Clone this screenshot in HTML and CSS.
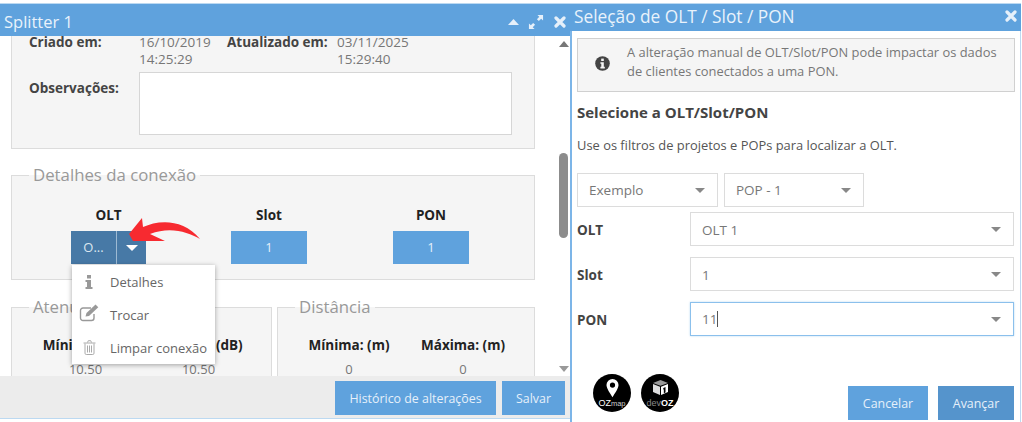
FILE: index.html
```html
<!DOCTYPE html>
<html lang="pt-BR">
<head>
<meta charset="utf-8">
<title>Splitter 1</title>
<link rel="stylesheet" href="styles.css">
</head>
<body>
<div class="desk">
  <section class="win win-left">
    <header class="bar bar-left">
      <span class="bar-title">Splitter 1</span>
      <span class="bar-tools">
        <svg class="ico-up" width="11" height="6" viewBox="0 0 11 6"><path d="M5.500 0 11 6H0Z" fill="#e6f0fa"/></svg>
        <svg class="ico-exp" width="16" height="16" viewBox="0 0 17 17"><path d="M10 1h6v6l-2-2-2.500 2.500-2-2L12 3ZM1 16v-6l2 2 2.500-2.500 2 2L5 14l2 2Z" fill="#e6f0fa"/></svg>
        <svg class="ico-x" width="12" height="12" viewBox="0 0 12 12"><path d="M2 2l8 8M10 2l-8 8" stroke="#e6f0fa" stroke-width="3.200" stroke-linecap="round"/></svg>
      </span>
    </header>
    <div class="left-body">
      <div class="scroll-content">
        <div class="panel panel-top">
          <div class="meta-row">
            <b class="meta-label">Criado em:</b>
            <div class="meta-val"><span>16/10/2019</span><span>14:25:29</span></div>
            <b class="meta-label2">Atualizado em:</b>
            <div class="meta-val"><span>03/11/2025</span><span>15:29:40</span></div>
          </div>
          <div class="obs-row">
            <b class="meta-label">Observações:</b>
            <div class="textarea"></div>
          </div>
        </div>
        <fieldset class="panel panel-conn">
          <legend>Detalhes da conexão</legend>
          <div class="conn-grid">
            <div class="conn-col">
              <b>OLT</b>
              <div class="split-btn"><span class="split-main">O...</span><span class="split-caret"><i class="caret-w"></i></span></div>
            </div>
            <div class="conn-col"><b>Slot</b><div class="val-btn">1</div></div>
            <div class="conn-col"><b>PON</b><div class="val-btn">1</div></div>
          </div>
        </fieldset>
        <div class="two-col">
          <fieldset class="panel panel-half panel-at">
            <legend>Atenuação</legend>
            <div class="half-grid">
              <div><b>Mínima: (dB)</b><span>10.50</span></div>
              <div><b>Máxima: (dB)</b><span>10.50</span></div>
            </div>
          </fieldset>
          <fieldset class="panel panel-half panel-di">
            <legend>Distância</legend>
            <div class="half-grid">
              <div><b>Mínima: (m)</b><span>0</span></div>
              <div><b>Máxima: (m)</b><span>0</span></div>
            </div>
          </fieldset>
        </div>
      </div>
      <div class="scrollbar">
        <i class="sb-up"></i>
        <i class="sb-thumb"></i>
        <i class="sb-down"></i>
      </div>
    </div>
    <footer class="left-foot">
      <button class="btn btn-hist">Histórico de alterações</button>
      <button class="btn btn-save">Salvar</button>
    </footer>
  </section>

  <section class="win win-right">
    <header class="bar bar-right">
      <span class="bar-title">Seleção de OLT / Slot / PON</span>
      <svg class="ico-x" width="12" height="12" viewBox="0 0 12 12"><path d="M2 2l8 8M10 2l-8 8" stroke="#e6f0fa" stroke-width="3.200" stroke-linecap="round"/></svg>
    </header>
    <div class="right-body">
      <div class="alert">
        <svg class="alert-ico" width="15" height="15" viewBox="0 0 15 15"><circle cx="7.500" cy="7.500" r="7.300" fill="#444"/><rect x="6.200" y="2.600" width="2.600" height="2.400" fill="#f5f5f5"/><path d="M5.400 6.200H8.800V10.800H9.800V12.400H5.400V10.800H6.300V7.800H5.400Z" fill="#f5f5f5"/></svg>
        <p>A alteração manual de OLT/Slot/PON pode impactar os dados<br>de clientes conectados a uma PON.</p>
      </div>
      <h2>Selecione a OLT/Slot/PON</h2>
      <p class="hint">Use os filtros de projetos e POPs para localizar a OLT.</p>
      <div class="filters">
        <div class="select sel-a"><span>Exemplo</span><i class="caret"></i></div>
        <div class="select sel-b"><span>POP - 1</span><i class="caret"></i></div>
      </div>
      <div class="form-row"><b>OLT</b><div class="select sel-wide"><span>OLT 1</span><i class="caret"></i></div></div>
      <div class="form-row"><b>Slot</b><div class="select sel-wide"><span>1</span><i class="caret"></i></div></div>
      <div class="form-row"><b>PON</b><div class="select sel-wide sel-focus"><span>11<i class="cursor"></i></span><i class="caret"></i></div></div>
      <div class="right-foot">
        <div class="logos">
          <div class="logo">
            <svg class="logo-pin" viewBox="0 0 16 24"><path fill-rule="evenodd" d="M8 0a7.600 7.600 0 0 1 7.600 7.600C15.600 12 11 18 8 23 5 18 .4 12 .4 7.600A7.600 7.600 0 0 1 8 0ZM8 4.300a3.300 3.300 0 1 0 0 6.600 3.300 3.300 0 0 0 0-6.600Z" fill="#fff"/></svg>
            <span class="logo-txt"><b>OZ</b><small>map</small></span>
          </div>
          <div class="logo">
            <svg class="logo-cube" viewBox="0 0 20 18"><path d="M10 0 19 3.500 10 7 1 3.500Z" fill="#999"/><path d="M1 4.800 9.400 8.100V18L1 14.500Z" fill="#ddd"/><path d="M10.600 8.100 19 4.800V14.500L10.600 18Z" fill="#fff"/><path d="M13.500 9.500 16 8.500V15L14 15.800V11L13 11.500Z" fill="#000"/></svg>
            <span class="logo-txt"><em>dev</em><b>OZ</b></span>
          </div>
        </div>
        <div class="foot-btns">
          <button class="btn btn-cancel">Cancelar</button>
          <button class="btn btn-next">Avançar</button>
        </div>
      </div>
    </div>
  </section>

  <div class="menu">
    <div class="menu-item"><svg width="10" height="15" viewBox="0 0 10 15"><path d="M3 1h4v3.500H3ZM1.500 6H7v7h1.500v2H1.500v-2H3V8H1.500Z" fill="#999"/></svg><span>Detalhes</span></div>
    <div class="menu-item"><svg class="mi-edit" width="21" height="18" viewBox="0 0 21 18"><path d="M15 10v4a2.500 2.500 0 0 1-2.500 2.500H4A2.500 2.500 0 0 1 1.500 14V6.500A2.500 2.500 0 0 1 4 4h8" fill="none" stroke="#999" stroke-width="1.400"/><path d="M6.500 12.500l1-3.500L16.500 0.500l2.800 2.800L10 12Z" fill="#999"/></svg><span>Trocar</span></div>
    <div class="menu-item"><svg class="mi-trash" width="13" height="15" viewBox="0 0 13 15"><path d="M4.500 2.500 5.300.7h2.400l.8 1.800M.5 3h12M2 3.500v9.700a1.300 1.300 0 0 0 1.300 1.300h6.400a1.300 1.300 0 0 0 1.300-1.300V3.500M4.500 5.500v7M6.500 5.500v7M8.500 5.500v7" fill="none" stroke="#aaa" stroke-width="1"/></svg><span>Limpar conexão</span></div>
  </div>

  <svg class="arrow" width="74" height="27" viewBox="0 0 74 27"><path d="M1 18 14 2 15 11C30 4 55 2 72 23 60 16 42 10 22 18L37 25H5Z" fill="#f72a30"/></svg>
</div>
</body>
</html>
```

FILE: styles.css
```css
* { box-sizing: border-box; }
html, body { margin: 0; height: 100%; background: #fff; }
body { font-family: "Open Sans", sans-serif; font-size: 13.5px; color: #555; overflow: hidden; }
b { font-weight: 700; }
.desk { position: relative; width: 1022px; height: 422px; display: flex; padding-top: 4px; }
.win { display: flex; flex-direction: column; }
.win-left { width: 570px; height: 415px; }
.win-right { width: 452px; height: 418px; }
.bar { background: #5fa2dd; color: #e9f2fb; display: flex; justify-content: space-between; flex: none; box-shadow: 0 -1px 0 #bcd9f1; position: relative; z-index: 1; }
.bar-title { font-size: 17.300px; line-height: 23px; }
.bar-left { height: 32px; padding: 6px 4px 0 4px; }
.bar-left .bar-title { font-size: 16.500px; }
.bar-tools { display: flex; align-items: center; height: 23px; }
.ico-up { margin-right: 9px; }
.ico-exp { margin-right: 10px; }
.bar-right { height: 27px; padding: 0 4px 3px 4px; align-items: center; margin-right: 1px; }
.left-body { flex: 1; display: flex; min-height: 0; overflow: hidden; position: relative; margin-top: -3px; }
.scroll-content { width: 555px; padding: 0 20px 0 11px; overflow: hidden; flex: none; }
.panel { border: 1px solid #dcdcdc; background: #f5f5f5; margin: 0; }
legend { font-size: 16.800px; color: #999; padding: 0 4px; margin-left: 17px; line-height: 20px; }
.panel-top { border-top: 0; height: 116px; padding: 1px 21px 0 17px; }
.meta-row { display: grid; grid-template-columns: 110px 88px 110px 1fr; line-height: 17px; }
.meta-label, .meta-label2 { color: #444; }
.meta-val { color: #777; display: flex; flex-direction: column; }
.obs-row { display: flex; margin-top: 4px; }
.obs-row .meta-label { width: 110px; padding-top: 8px; flex: none; line-height: 17px; }
.textarea { width: 373px; height: 63px; background: #fff; border: 1px solid #d6d6d6; }
.panel-conn { margin-top: 16px; height: 115px; padding: 0; }
.conn-grid { display: grid; grid-template-columns: 75px 76px 77px; column-gap: 85px; padding: 21px 0 0 59px; text-align: center; }
.conn-col:last-child { margin-left: 1px; }
.conn-col b { display: block; color: #222; line-height: 18px; margin-bottom: 7px; }
.split-btn { display: flex; height: 33px; background: #4779a6; color: #dbe6f0; width: 75px; font-size: 13px; }
.split-main { width: 46px; line-height: 32px; border-right: 1px solid #9dbad3; }
.split-caret { flex: 1; display: flex; align-items: center; justify-content: center; padding-top: 1px; }
.caret-w { width: 0; height: 0; border: 6px solid transparent; border-top: 6px solid #fff; border-bottom: 0; }
.val-btn { height: 33px; background: #5fa2dd; color: #e6f0fa; line-height: 32px; font-size: 13px; }
.two-col { display: flex; gap: 5px; margin-top: 17px; }
.panel-half { height: 110px; padding: 0; flex: none; }
.panel-at { width: 261px; }
.panel-di { width: 258px; }
.half-grid { display: grid; grid-template-columns: 113px 113px; text-align: center; padding: 19px 0 0 17px; }
.half-grid b { display: block; color: #222; line-height: 18px; margin-bottom: 7px; }
.half-grid span { display: block; line-height: 17px; color: #777; font-size: 13px; }
.panel-di .half-grid { padding-left: 14px; grid-template-columns: 114px 114px; }
.scrollbar { width: 15px; background: #fff; display: flex; flex-direction: column; align-items: center; flex: none; padding-left: 2px; }
.sb-up { width: 0; height: 0; border: 5px solid transparent; border-bottom: 6px solid #777; border-top: 0; margin-top: 8px; }
.sb-thumb { width: 9px; height: 85px; background: #8c8c8c; border-radius: 5px; margin-top: 106px; }
.sb-down { width: 0; height: 0; border: 5px solid transparent; border-top: 6px solid #999; border-bottom: 0; margin-top: auto; margin-bottom: 4px; }
.left-foot { height: 43px; background: #ececec; flex: none; display: flex; justify-content: flex-end; gap: 6px; padding: 5px 5px 0 0; border-bottom: 1px solid #bcd9f1; }
.btn { border: 0; background: #5fa2dd; color: #e6f0fa; font: 500 12.400px "Open Sans", sans-serif; height: 34px; padding: 0; }
.btn-hist { width: 161px; }
.btn-save { width: 63px; }
.right-body { flex: 1; display: flex; flex-direction: column; border-left: 2px solid #7cb5e8; border-right: 1px solid #bcd9f1; padding: 7px 5px 0 5px; min-height: 0; background: #fff; margin-right: 1px; }
.alert { height: 54px; background: #f5f5f5; border: 1px solid #d0d0d0; display: flex; align-items: center; padding: 0 0 6px 17px; }
.alert p { margin: 0 0 0 17px; font-size: 12.900px; line-height: 19px; color: #777; }
.alert-ico { flex: none; margin-top: 3px; }
h2 { font-size: 15px; line-height: 20px; margin: 10px 0 0; color: #444; font-weight: 700; }
.hint { margin: 14px 0 0; font-size: 12.900px; line-height: 18px; color: #555; }
.filters { display: flex; gap: 6px; margin-top: 19px; }
.select { display: flex; align-items: center; justify-content: space-between; height: 34px; background: #fff; border: 1px solid #dcdcdc; color: #777; padding: 0 12px 0 11px; }
.sel-a { width: 141px; }
.sel-b { width: 140px; }
.caret { width: 0; height: 0; border: 5.500px solid transparent; border-top: 5.500px solid #888; border-bottom: 0; }
.form-row { display: flex; align-items: center; margin-top: 11px; height: 34px; }
.filters + .form-row { margin-top: 5px; }
.form-row b { width: 113px; color: #444; flex: none; padding-top: 1px; }
.sel-wide { flex: 1; margin-right: 1px; }
.sel-wide:not(.sel-focus) span { padding-top: 1px; }
.sel-focus { border-color: #8bc0ec; box-shadow: 0 0 2px #bcd9f1; }
.cursor { display: inline-block; width: 1px; height: 16px; background: #555; vertical-align: -3px; }
.right-foot { flex: 1; display: flex; justify-content: space-between; align-items: flex-end; padding-left: 16px; }
.logos { display: flex; gap: 10px; padding-bottom: 10px; }
.logo { width: 38px; height: 38px; border-radius: 50%; background: #000; display: flex; flex-direction: column; align-items: center; padding-top: 5px; color: #fff; }
.logo-pin { width: 13px; height: 19px; flex: none; }
.logo-cube { width: 17px; height: 15px; flex: none; margin-top: 1px; margin-bottom: 3px; }
.logo-txt { font-size: 9px; line-height: 9px; font-family: "Liberation Sans", sans-serif; margin-top: 1px; white-space: nowrap; }
.logo-txt b { font-weight: 400; }
.logo-txt small { font-size: 7.500px; color: #ccc; }
.logo-txt em { font-style: normal; color: #888; }
.logo-cube + .logo-txt b { font-weight: 700; }
.foot-btns { display: flex; gap: 10px; padding-bottom: 2px; margin-right: 1px; }
.btn-cancel { width: 80px; }
.btn-next { width: 76px; background: #5594cc; }
.menu { position: absolute; left: 72px; top: 265px; width: 143px; height: 99px; background: #fff; box-shadow: 0 1px 5px rgba(0,0,0,.35); }
.menu-item { height: 33px; display: flex; align-items: center; position: relative; padding: 1px 0 0 38px; font-size: 13px; color: #666; }
.menu-item svg { position: absolute; left: 12px; top: 9px; }
.menu-item .mi-edit { left: 7px; top: 6px; }
.menu-item .mi-trash { left: 11px; }
.arrow { position: absolute; left: 128px; top: 216px; }
```
